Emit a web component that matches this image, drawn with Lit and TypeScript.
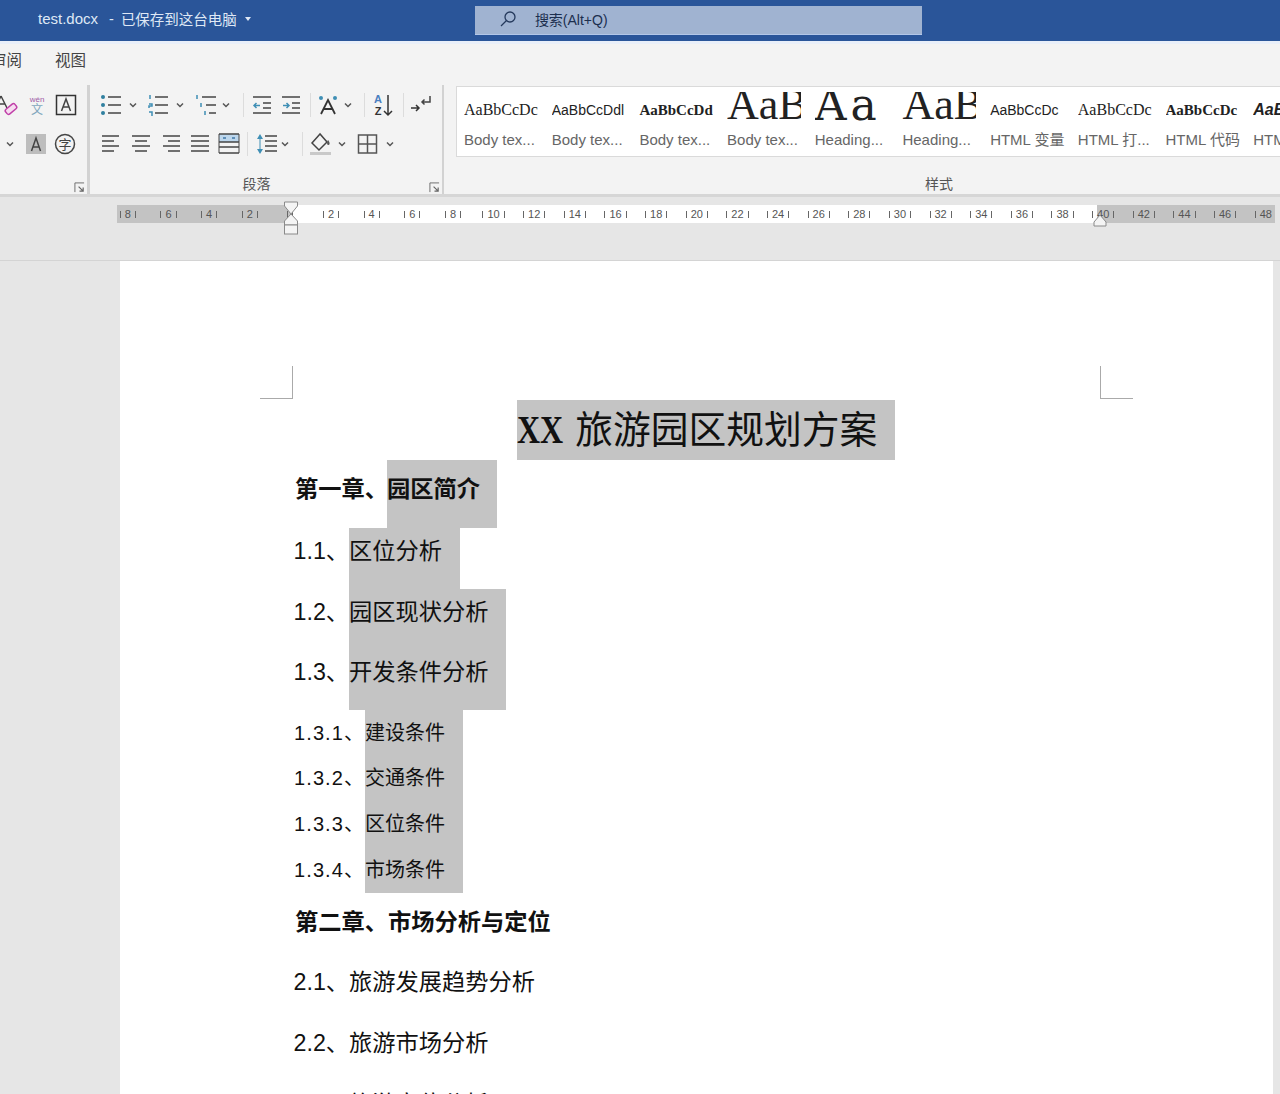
import { LitElement, html, css, svg } from "lit";
import { customElement } from "lit/decorators.js";

const ico = (body: unknown) => html`<svg class="ico" viewBox="0 0 24 24" fill="none" stroke="#454545" stroke-width="1.5">${body}</svg>`;
const lines = (rows: number[][]) => rows.map(([a, b, y]) => svg`<path d="M${a} ${y}H${b}"/>`);

const chev = html`<svg class="chev" viewBox="0 0 10 10" fill="none" stroke="#555" stroke-width="1.5"><path d="M2 3.5 5 6.5 8 3.5"/></svg>`;
const launcher = html`<svg class="launch" viewBox="0 0 12 12" fill="none" stroke="#666" stroke-width="1"><path d="M1 11V1H11"/><path d="M5 5 10 10M10 6V10H6" stroke-width="1.3"/></svg>`;

const BLUE = "#3f8fb5";
const icons = {
  marker: ico(svg`<path d="M7 3 1 15M7 3 13 15M3.5 11H10.500"/><rect x="11" y="13" width="12" height="6" rx="2" transform="rotate(-40 17 16)" stroke="#c03fa8" fill="#f6dcf0"/>`),
  phonetic: ico(svg`<text x="12" y="9" font-size="8" text-anchor="middle" fill="#a05ca6" stroke="none" font-family="Liberation Sans">wén</text><text x="12" y="21" font-size="12" text-anchor="middle" fill="#7fa6bd" stroke="none" font-family="Noto Sans CJK SC">文</text>`),
  boxA: ico(svg`<rect x="2.500" y="2.500" width="19" height="19" stroke="#333"/><path d="M7.500 18 12 6 16.500 18M9 14H15" stroke="#444"/>`),
  shadeA: html`<svg class="ico" viewBox="0 0 24 24"><rect x="2" y="2" width="20" height="20" fill="#bdbdbd"/><path d="M7.500 19 12 6 16.500 19M9 15H15" fill="none" stroke="#444" stroke-width="1.500"/></svg>`,
  circled: ico(svg`<circle cx="12" cy="12" r="9.500"/><text x="12" y="17" font-size="13" text-anchor="middle" fill="#444" stroke="none" font-family="Noto Sans CJK SC">字</text>`),
  bullets: ico(svg`<g fill="#2f7f9f" stroke="none"><circle cx="4" cy="4" r="2"/><circle cx="4" cy="12" r="2"/><circle cx="4" cy="20" r="2"/></g>${lines([[9, 22, 4], [9, 22, 12], [9, 22, 20]])}`),
  numbers: ico(svg`<g stroke=${BLUE}><path d="M4 2V6M3 11H6V13H3V15M3 19H6V23"/></g>${lines([[9, 22, 4], [9, 22, 12], [9, 22, 20]])}`),
  multi: ico(svg`<g stroke=${BLUE}><path d="M3 2V6M7 10V14M11 18V22"/></g>${lines([[8, 22, 4], [12, 22, 12], [15, 22, 20]])}`),
  outdent: ico(svg`${lines([[3, 21, 4], [13, 21, 10], [13, 21, 15], [3, 21, 20]])}<path d="M10 12.500H4M6.500 10 4 12.500 6.500 15" stroke="#3f8fb5"/>`),
  indent: ico(svg`${lines([[3, 21, 4], [13, 21, 10], [13, 21, 15], [3, 21, 20]])}<path d="M4 12.500H10M7.500 10 10 12.500 7.500 15" stroke="#3f8fb5"/>`),
  asian: ico(svg`<g fill="#3f8fb5" stroke="none"><circle cx="5" cy="5" r="2"/><circle cx="19" cy="5" r="2"/></g><path d="M5 21 12 7 19 21M8 16H16" stroke-width="1.800" stroke="#333"/>`),
  sort: ico(svg`<text x="7" y="10" font-size="11" font-weight="700" text-anchor="middle" fill="#4a7fc0" stroke="none" font-family="Liberation Sans">A</text><text x="7" y="22" font-size="11" font-weight="700" text-anchor="middle" fill="#333" stroke="none" font-family="Liberation Sans">Z</text><path d="M17 2V22M13 18 17 22 21 18" stroke="#333"/>`),
  pilcrow: ico(svg`<path d="M21 3V9H13M15.500 6.500 13 9 15.500 11.500" stroke="#444"/><path d="M2 15H10M7 12 10 15 7 18" stroke="#333"/>`),
  alignL: ico(lines([[3, 20, 4], [3, 15, 9], [3, 20, 14], [3, 15, 19]])),
  alignC: ico(lines([[3, 21, 4], [6, 18, 9], [3, 21, 14], [6, 18, 19]])),
  alignR: ico(lines([[4, 21, 4], [9, 21, 9], [4, 21, 14], [9, 21, 19]])),
  justify: ico(lines([[3, 21, 4], [3, 21, 9], [3, 21, 14], [3, 21, 19]])),
  distribute: ico(svg`<rect x="2" y="2" width="20" height="8" fill="#bcd6ec" stroke="none"/><path d="M6 6H9M15 6H18" stroke="#3f78a8"/>${lines([[2, 22, 2], [2, 22, 10], [2, 22, 15], [2, 22, 21]])}<path d="M2 2V21M22 2V21" stroke-width="1"/>`),
  spacing: ico(svg`<path d="M5 2 2 7H8ZM5 22 2 17H8Z" fill="#3f8fb5" stroke="none"/><path d="M5 7V17" stroke="#3f8fb5" stroke-width="1"/>${lines([[10, 22, 4], [10, 22, 9], [10, 22, 14], [10, 22, 19]])}`),
  fill: ico(svg`<path d="M11 2 3 11 10 18 18 10Z" stroke="#444"/><path d="M19 8C17.500 11 18 13 19.500 13S21 10 19 8Z" fill="#555" stroke="none"/><rect x="1" y="20" width="21" height="3" fill="#c9c9c9" stroke="none"/>`),
  borders: ico(svg`<rect x="2.500" y="3" width="18" height="18" stroke="#555"/><path d="M11.500 3V21M2.500 12H20.500" stroke="#555"/>`),
};

const styleItems = [
  { p: "AaBbCcDc", l: "Body tex...", k: "serif" },
  { p: "AaBbCcDdl", l: "Body tex...", k: "sans" },
  { p: "AaBbCcDd", l: "Body tex...", k: "bold" },
  { p: "AaBb", l: "Body tex...", k: "big" },
  { p: "Aa", l: "Heading...", k: "wide" },
  { p: "AaBb", l: "Heading...", k: "big" },
  { p: "AaBbCcDc", l: "HTML 变量", k: "sans" },
  { p: "AaBbCcDc", l: "HTML 打...", k: "serif" },
  { p: "AaBbCcDc", l: "HTML 代码", k: "bold" },
  { p: "AaBb", l: "HTM", k: "ital" },
];

const rulerMarks = ["8", "6", "4", "2", "", "2", "4", "6", "8", "10", "12", "14", "16", "18", "20", "22", "24", "26", "28", "30", "32", "34", "36", "38", "40", "42", "44", "46", "48"];

@customElement("app-root")
export class AppRoot extends LitElement {
  static styles = css`
    :host {
      display: block;
      width: 1280px;
      height: 1094px;
      overflow: hidden;
      background: #e6e6e6;
      font-family: "Liberation Sans", "Noto Sans CJK SC", sans-serif;
    }

    .titlebar {
      height: 41px;
      background: #2a5599;
      display: flex;
      align-items: center;
      padding-left: 38px;
      box-sizing: border-box;
      color: #dfe8f5;
      font-size: 14.500px;
    }
    .titletext { display: flex; align-items: center; padding-bottom: 4px; }
    .docname { font-size: 15px; }
    .sep-dash { margin: 0 7px 0 11px; }
    .caret {
      width: 0;
      height: 0;
      margin-left: 8px;
      border: 3.500px solid transparent;
      border-top: 4px solid #dfe8f5;
      border-bottom: 0;
    }
    .search {
      margin-left: 224px;
      width: 447px;
      height: 29px;
      background: #a0b3d1;
      border-bottom: 1px solid #b3c7e8;
      box-sizing: border-box;
      display: flex;
      align-items: center;
      gap: 18px;
      padding: 0 0 3px 24px;
      color: #1c2f4f;
      font-size: 14px;
    }
    .search svg { width: 18px; height: 18px; }

    .ribbon {
      height: 156px;
      background: #f3f3f3;
      border-top: 3px solid #e9eff9;
      border-bottom: 3px solid #d6d6d6;
      box-sizing: border-box;
    }
    .tabs {
      height: 41px;
      display: flex;
      align-items: center;
      gap: 33px;
      margin-left: -9px;
      padding-bottom: 11px;
      box-sizing: border-box;
      font-size: 15.500px;
      color: #444;
    }
    .groups {
      display: flex;
      height: 109px;
    }
    .group {
      display: flex;
      flex-direction: column;
      box-sizing: border-box;
      border-right: 2px solid #d2d2d2;
      flex: none;
    }
    .g-font { width: 90px; border-right-width: 3px; padding-right: 2px; overflow: hidden; }
    .g-para { width: 354px; padding-left: 9px; }
    .g-styles { flex: 1; border: 0; padding-left: 12px; min-width: 0; }

    .rows {
      height: 85px;
      padding-top: 8px;
      box-sizing: border-box;
      display: flex;
      flex-direction: column;
      gap: 15px;
    }
    .row { display: flex; align-items: center; height: 24px; }
    .ico { width: 24px; height: 24px; flex: none; display: block; }
    .chev { width: 10px; height: 10px; flex: none; }
    .vsep { width: 1px; height: 24px; background: #dcdcdc; flex: none; }
    .m1 { margin-left: 1px; } .m3 { margin-left: 3px; } .m4 { margin-left: 4px; }
    .m5 { margin-left: 5px; } .m6 { margin-left: 6px; } .m7 { margin-left: 7px; }
    .m8 { margin-left: 8px; } .m9 { margin-left: 9px; } .m11 { margin-left: 11px; }
    .m12 { margin-left: 12px; }

    .f-row1 { margin-left: -6px; }
    .f-row2 { padding-left: 5px; }

    .glabel {
      height: 24px;
      display: grid;
      grid-template-columns: 1fr auto 1fr;
      align-items: center;
      font-size: 14px;
      color: #555;
    }
    .glabel-text { margin: 2px 28px 0 0; }
    .launch { width: 11px; height: 11px; justify-self: end; margin-right: 2px; margin-top: 10px; }
    .g-font .glabel { display: flex; justify-content: flex-end; }
    .g-font .launch { margin-right: 0; }

    .gallery {
      height: 71px;
      flex: none;
      margin-top: 1px;
      background: #fff;
      border: 1px solid #dadada;
      border-right: 0;
      box-sizing: border-box;
      display: flex;
      overflow: hidden;
      padding-left: 7px;
    }
    .style {
      width: 87.700px;
      flex: none;
      box-sizing: border-box;
      padding-top: 5px;
    }
    .preview {
      width: 74px;
      height: 36px;
      overflow: hidden;
      white-space: nowrap;
      color: #222;
      line-height: 36px;
      font-size: 16px;
      font-family: "Liberation Serif", serif;
    }
    .preview.sans { font-family: "Liberation Sans", sans-serif; font-size: 14px; }
    .preview.bold { font-weight: 700; font-size: 15px; }
    .preview.big { font-size: 44px; line-height: 36px; }
    .preview.big span, .preview.wide span { display: block; margin-top: -5px; }
    .preview.wide { font-size: 44px; letter-spacing: 4px; font-family: "DejaVu Serif", serif; }
    .preview.ital { font-weight: 700; font-style: italic; font-size: 16px; font-family: "Liberation Sans", sans-serif; }
    .slabel {
      margin-top: 3px;
      font-size: 15px;
      line-height: 18px;
      color: #666;
      white-space: nowrap;
    }
    .styles-label { height: 21px; margin-top: 16px; padding: 0 14px 0 156px; text-align: center; font-size: 14px; color: #555; }

    .rulerband {
      height: 64px;
      padding: 8px 0 0 117px;
      box-sizing: border-box;
      border-bottom: 1px solid #d4d4d4;
    }
    .rulerwrap { position: relative; width: 1158px; height: 18px; }
    .ruler {
      height: 18px;
      overflow: hidden;
      background: linear-gradient(90deg, #c3c3c3 174px, #fff 174px, #fff 980px, #c3c3c3 980px);
    }
    .track { display: flex; margin-left: -9.500px; height: 18px; }
    .tick {
      width: 40.650px;
      flex: none;
      display: flex;
      align-items: center;
      justify-content: center;
      gap: 4px;
      font-size: 11px;
      color: #555;
    }
    .tick::before, .tick::after {
      content: "";
      width: 1px;
      height: 7px;
      background: #666;
    }
    .hourglass { position: absolute; left: 165px; top: -4px; width: 18px; height: 35px; }
    .rightmark { position: absolute; left: 975px; top: 9px; width: 16px; height: 13px; }

    .page {
      position: relative;
      margin-left: 120px;
      width: 1153px;
      height: 900px;
      background: #fff;
      padding: 139px 0 0 175px;
      box-sizing: border-box;
      color: #111;
    }
    .crop { position: absolute; width: 33px; height: 33px; top: 105px; border: 0 solid #aaa; box-sizing: border-box; }
    .crop.l { left: 140px; border-right-width: 1px; border-bottom-width: 1px; }
    .crop.r { left: 980px; border-left-width: 1px; border-bottom-width: 1px; }

    .content { width: 803px; }
    .line { display: flex; white-space: nowrap; box-sizing: border-box; }
    .hl { background: #c4c4c4; padding-right: 18px; }

    .title {
      height: 60px;
      justify-content: center;
      padding-left: 19px;
      font-size: 37.750px;
      line-height: 60px;
    }
    .title .hl { display: block; }
    .title b {
      display: inline-block;
      font-family: "Liberation Serif", serif;
      font-size: 40px;
      transform: scaleX(0.8);
      transform-origin: left;
      margin-right: -9.600px;
    }

    .ch { font-size: 23.250px; font-weight: 700; }
    .ch.first { height: 68px; line-height: 30px; padding-top: 14px; }
    .ch.first .hl { margin: -14px 0 0 -1px; padding: 14px 17px 0 0; height: 68px; box-sizing: border-box; }
    .ch.next { height: 60.750px; line-height: 58px; }

    .sec { font-size: 23.250px; height: 60.500px; line-height: 30px; padding-top: 8px; }
    .sec .hl { margin-top: -8px; padding: 8px 17.500px 0 0; height: 60.500px; box-sizing: border-box; }
    .sec.plain { height: 60.750px; line-height: 58px; padding-top: 0; }

    .sub { font-size: 20px; height: 45.750px; line-height: 46px; }
    .sub .num { letter-spacing: 1.100px; }
    .num { margin-left: -1px; }
    .sec .num { margin-left: -1.500px; }
  `;

  render() {
    return html`
      <div class="titlebar">
        <div class="titletext">
          <span class="docname">test.docx</span>
          <span class="sep-dash">-</span>
          <span>已保存到这台电脑</span>
          <span class="caret"></span>
        </div>
        <div class="search">
          <svg viewBox="0 0 18 18" fill="none" stroke="#24395c" stroke-width="1.300"><circle cx="11" cy="7" r="5"/><path d="M7.500 10.500 2 16"/></svg>
          <span>搜索(Alt+Q)</span>
        </div>
      </div>

      <div class="ribbon">
        <div class="tabs"><span>审阅</span><span>视图</span></div>
        <div class="groups">
          <div class="group g-font">
            <div class="rows">
              <div class="row f-row1">${icons.marker}<span class="m7"></span>${icons.phonetic}<span class="m5"></span>${icons.boxA}</div>
              <div class="row f-row2">${chev}<span class="m9"></span>${icons.shadeA}<span class="m5"></span>${icons.circled}</div>
            </div>
            <div class="glabel">${launcher}</div>
          </div>

          <div class="group g-para">
            <div class="rows">
              <div class="row">
                ${icons.bullets}<span class="m5"></span>${chev}<span class="m8"></span>
                ${icons.numbers}<span class="m5"></span>${chev}<span class="m9"></span>
                ${icons.multi}<span class="m3"></span>${chev}<span class="m12"></span>
                <span class="vsep"></span><span class="m6"></span>
                ${icons.outdent}<span class="m5"></span>${icons.indent}<span class="m7"></span>
                <span class="vsep"></span><span class="m5"></span>
                ${icons.asian}<span class="m3"></span>${chev}<span class="m11"></span>
                <span class="vsep"></span><span class="m6"></span>
                ${icons.sort}<span class="m8"></span>
                <span class="vsep"></span><span class="m5"></span>
                ${icons.pilcrow}
              </div>
              <div class="row">
                ${icons.alignL}<span class="m6"></span>${icons.alignC}<span class="m6"></span>
                ${icons.alignR}<span class="m5"></span>${icons.justify}<span class="m5"></span>
                ${icons.distribute}<span class="m6"></span>
                <span class="vsep"></span><span class="m7"></span>
                ${icons.spacing}<span class="m1"></span>${chev}<span class="m12"></span>
                <span class="vsep"></span><span class="m6"></span>
                ${icons.fill}<span class="m4"></span>${chev}<span class="m9"></span>
                ${icons.borders}<span class="m5"></span>${chev}
              </div>
            </div>
            <div class="glabel"><span></span><span class="glabel-text">段落</span>${launcher}</div>
          </div>

          <div class="group g-styles">
            <div class="gallery">
              ${styleItems.map(
                (s) => html`<div class="style">
                  <div class="preview ${s.k}"><span>${s.p}</span></div>
                  <div class="slabel">${s.l}</div>
                </div>`
              )}
            </div>
            <div class="styles-label">样式</div>
          </div>
        </div>
      </div>

      <div class="rulerband">
        <div class="rulerwrap">
          <div class="ruler">
            <div class="track">${rulerMarks.map((m) => html`<span class="tick">${m}</span>`)}</div>
          </div>
          <svg class="hourglass" viewBox="0 0 18 35" fill="#f4f4f4" stroke="#8a8a8a"><path d="M2.500 1H15.500V5L9 13 2.500 5Z"/><path d="M9 13 15.500 20V24H2.500V20Z"/><rect x="2.500" y="24" width="13" height="9"/></svg>
          <svg class="rightmark" viewBox="0 0 16 13" fill="#f4f4f4" stroke="#8a8a8a"><path d="M8 1 14 8V12H2V8Z"/></svg>
        </div>
      </div>

      <div class="page">
        <div class="crop l"></div>
        <div class="crop r"></div>
        <div class="content">
          <div class="line title"><span class="hl"><b>XX</b> 旅游园区规划方案</span></div>
          <div class="line ch first"><span>第一章、</span><span class="hl">园区简介</span></div>
          <div class="line sec"><span class="num">1.1、</span><span class="hl">区位分析</span></div>
          <div class="line sec"><span class="num">1.2、</span><span class="hl">园区现状分析</span></div>
          <div class="line sec"><span class="num">1.3、</span><span class="hl">开发条件分析</span></div>
          <div class="line sub"><span class="num">1.3.1、</span><span class="hl">建设条件</span></div>
          <div class="line sub"><span class="num">1.3.2、</span><span class="hl">交通条件</span></div>
          <div class="line sub"><span class="num">1.3.3、</span><span class="hl">区位条件</span></div>
          <div class="line sub"><span class="num">1.3.4、</span><span class="hl">市场条件</span></div>
          <div class="line ch next"><span>第二章、市场分析与定位</span></div>
          <div class="line sec plain"><span class="num">2.1、</span><span>旅游发展趋势分析</span></div>
          <div class="line sec plain"><span class="num">2.2、</span><span>旅游市场分析</span></div>
          <div class="line sec plain"><span class="num">2.3、</span><span>旅游定位分析</span></div>
        </div>
      </div>
    `;
  }
}
